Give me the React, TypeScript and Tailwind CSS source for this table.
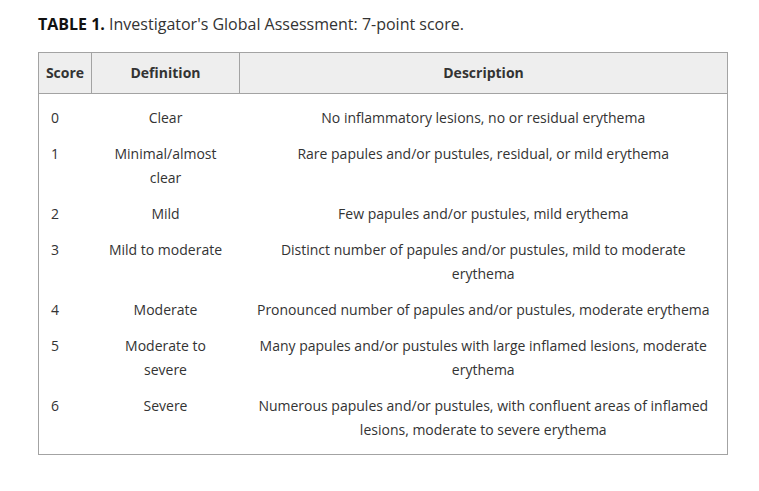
import React from "react";

const rows: [string, string, string][] = [
  ["0", "Clear", "No inflammatory lesions, no or residual erythema"],
  ["1", "Minimal/almost clear", "Rare papules and/or pustules, residual, or mild erythema"],
  ["2", "Mild", "Few papules and/or pustules, mild erythema"],
  ["3", "Mild to moderate", "Distinct number of papules and/or pustules, mild to moderate erythema"],
  ["4", "Moderate", "Pronounced number of papules and/or pustules, moderate erythema"],
  ["5", "Moderate to severe", "Many papules and/or pustules with large inflamed lesions, moderate erythema"],
  ["6", "Severe", "Numerous papules and/or pustules, with confluent areas of inflamed lesions, moderate to severe erythema"],
];

export default function App() {
  return (
    <div
      className="w-[759px] h-[491px] bg-white pl-[38px] pt-[12px] text-[#333]"
      style={{ fontFamily: '"Open Sans", sans-serif' }}
    >
      <div className="text-[16px] leading-[24px]">
        <span className="font-bold text-[#111]">TABLE 1.</span>{" "}
        <span className="text-[#333]">Investigator's Global Assessment: 7-point score.</span>
      </div>
      <table className="mt-[16px] w-[690px] table-fixed border-collapse border border-[#a3a3a3] text-[14px] leading-[24px]">
        <colgroup>
          <col className="w-[53px]" />
          <col className="w-[148px]" />
          <col />
        </colgroup>
        <thead>
          <tr className="bg-[#eeeeee]">
            <th className="border border-[#a3a3a3] px-[6px] py-[8px] font-bold text-center">Score</th>
            <th className="border border-[#a3a3a3] px-[12px] py-[8px] font-bold text-center">Definition</th>
            <th className="border border-[#a3a3a3] px-[12px] py-[8px] font-bold text-center">Description</th>
          </tr>
        </thead>
        <tbody>
          {rows.map(([s, d, desc], i) => {
            const pt = i === 0 ? "pt-[12px]" : "pt-[6px]";
            const pb = i === rows.length - 1 ? "pb-[12px]" : "pb-[6px]";
            return (
              <tr key={s}>
                <td className={`align-top pl-[12px] pr-[6px] ${pt} ${pb}`}>{s}</td>
                <td className={`align-top text-center px-[12px] ${pt} ${pb}`}>{d}</td>
                <td className={`align-top text-center px-[12px] ${pt} ${pb}`}>{desc}</td>
              </tr>
            );
          })}
        </tbody>
      </table>
    </div>
  );
}
